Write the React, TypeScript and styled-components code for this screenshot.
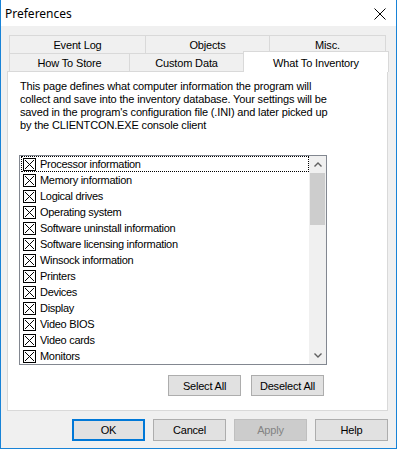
import React from "react";
import styled, { createGlobalStyle } from "styled-components";

const GlobalStyle = createGlobalStyle`
  html, body {
    margin: 0;
    padding: 0;
    background: #ffffff;
  }
  body {
    font-family: "Liberation Sans", Arial, sans-serif;
    font-size: 11px;
    letter-spacing: -0.3px;
    color: #000;
  }
`;

const Window = styled.div`
  width: 397px;
  height: 449px;
  box-sizing: border-box;
  border: 1px solid #1883d7;
  border-top: none;
  background: #f0f0f0;
  display: flex;
  flex-direction: column;
`;

const TitleBar = styled.div`
  height: 26px;
  flex: none;
  background: #ffffff;
  display: flex;
  align-items: center;
  justify-content: space-between;
  padding: 0 10px 0 4px;
`;

const Title = styled.span`
  font-family: "Noto Sans", "Open Sans", sans-serif;
  font-size: 12px;
  letter-spacing: 0;
  color: #000;
`;

const CloseIcon = styled.svg`
  width: 12px;
  height: 12px;
  margin-top: 2px;
`;

const Body = styled.div`
  flex: 1;
  display: flex;
  flex-direction: column;
  padding: 9px 8px 0 6px;
`;

const TabRow = styled.div`
  display: flex;
  align-items: flex-end;
  height: 18px;
  margin-left: 2px;
`;

const Tab = styled.div<{ $width: number; $selected?: boolean }>`
  width: ${(p) => p.$width}px;
  height: ${(p) => (p.$selected ? 21 : 18)}px;
  box-sizing: border-box;
  flex: none;
  border: 1px solid #d9d9d9;
  border-bottom: none;
  background: ${(p) => (p.$selected ? "#ffffff" : "#f0f0f0")};
  display: flex;
  align-items: center;
  justify-content: center;
  padding-top: 1px;
  letter-spacing: -0.15px;
  & + & {
    margin-left: -1px;
  }
  ${(p) =>
    p.$selected &&
    `
    position: relative;
    z-index: 1;
    margin-bottom: -1px;
  `}
`;

const Panel = styled.div`
  height: 340px;
  box-sizing: border-box;
  border: 1px solid #d9d9d9;
  background: #ffffff;
  display: flex;
  flex-direction: column;
  padding: 8px 0 0 11px;
`;

const Description = styled.p`
  margin: 0 0 0 1px;
  width: 340px;
  line-height: 13px;
  letter-spacing: -0.15px;
`;

const ListBox = styled.div`
  margin-top: 23px;
  width: 308px;
  height: 210px;
  box-sizing: border-box;
  border: 1px solid #828790;
  display: flex;
`;

const Items = styled.div`
  flex: 1;
  display: flex;
  flex-direction: column;
  overflow: hidden;
`;

const Item = styled.div<{ $focused?: boolean }>`
  height: 16px;
  flex: none;
  box-sizing: border-box;
  display: flex;
  align-items: center;
  gap: 4px;
  padding-left: 2px;
  margin-left: 1px;
  outline: ${(p) => (p.$focused ? "1px dotted #000" : "none")};
  outline-offset: -1px;
  white-space: nowrap;
`;

const Scrollbar = styled.div`
  width: 17px;
  flex: none;
  background: #f0f0f0;
  display: flex;
  flex-direction: column;
`;

const ArrowBox = styled.div`
  height: 17px;
  flex: none;
  display: flex;
  align-items: center;
  justify-content: center;
`;

const Thumb = styled.div`
  height: 52px;
  margin: 0 1px;
  background: #cdcdcd;
`;

const Track = styled.div`
  flex: 1;
`;

const ListActions = styled.div`
  width: 308px;
  display: flex;
  justify-content: flex-end;
  gap: 10px;
  margin-top: 10px;
  padding-right: 3px;
  box-sizing: border-box;
`;

const Button = styled.button<{ $default?: boolean; $height?: number }>`
  width: 73px;
  height: ${(p) => p.$height ?? 21}px;
  box-sizing: border-box;
  padding: 0;
  font-family: "Liberation Sans", Arial, sans-serif;
  font-size: 11px;
  letter-spacing: -0.2px;
  color: #000;
  background: #e1e1e1;
  border: ${(p) => (p.$default ? "2px solid #0078d7" : "1px solid #adadad")};
  &:disabled {
    background: #cccccc;
    border-color: #bfbfbf;
    color: #838383;
  }
`;

const DialogActions = styled.div`
  display: flex;
  justify-content: flex-end;
  gap: 8px;
  margin-top: 8px;
`;

const CheckMark = () => (
  <svg width="13" height="13" viewBox="0 0 13 13">
    <rect x="0.5" y="0.5" width="12" height="12" fill="#fff" stroke="#000" />
    <path d="M2 2 L11 11 M11 2 L2 11" stroke="#000" strokeWidth="1" shapeRendering="crispEdges" />
  </svg>
);

const Chevron = ({ down }: { down?: boolean }) => (
  <svg width="8" height="5" viewBox="0 0 8 5">
    <path
      d={down ? "M0.5 0.5 L4 4 L7.5 0.5" : "M0.5 4.5 L4 1 L7.5 4.5"}
      fill="none"
      stroke="#606060"
      strokeWidth="1.4"
    />
  </svg>
);

const items = [
  "Processor information",
  "Memory information",
  "Logical drives",
  "Operating system",
  "Software uninstall information",
  "Software licensing information",
  "Winsock information",
  "Printers",
  "Devices",
  "Display",
  "Video BIOS",
  "Video cards",
  "Monitors",
];

const App: React.FC = () => {
  return (
    <>
      <GlobalStyle />
      <Window>
        <TitleBar>
          <Title>Preferences</Title>
          <CloseIcon viewBox="0 0 12 12">
            <path d="M0.5 0.5 L11.5 11.5 M11.5 0.5 L0.5 11.5" stroke="#000" strokeWidth="1" />
          </CloseIcon>
        </TitleBar>
        <Body>
          <TabRow>
            <Tab $width={137}>Event Log</Tab>
            <Tab $width={125}>Objects</Tab>
            <Tab $width={117}>Misc.</Tab>
          </TabRow>
          <TabRow>
            <Tab $width={121}>How To Store</Tab>
            <Tab $width={115}>Custom Data</Tab>
            <Tab $width={146} $selected>
              What To Inventory
            </Tab>
          </TabRow>
          <Panel>
            <Description>
              This page defines what computer information the program will
              <br />
              collect and save into the inventory database. Your settings will be
              <br />
              saved in the program's configuration file (.INI) and later picked up
              <br />
              by the CLIENTCON.EXE console client
            </Description>
            <ListBox>
              <Items>
                {items.map((label, i) => (
                  <Item key={label} $focused={i === 0}>
                    <CheckMark />
                    {label}
                  </Item>
                ))}
              </Items>
              <Scrollbar>
                <ArrowBox>
                  <Chevron />
                </ArrowBox>
                <Thumb />
                <Track />
                <ArrowBox>
                  <Chevron down />
                </ArrowBox>
              </Scrollbar>
            </ListBox>
            <ListActions>
              <Button>Select All</Button>
              <Button>Deselect All</Button>
            </ListActions>
          </Panel>
          <DialogActions>
            <Button $default $height={22}>OK</Button>
            <Button $height={22}>Cancel</Button>
            <Button $height={22} disabled>
              Apply
            </Button>
            <Button $height={22}>Help</Button>
          </DialogActions>
        </Body>
      </Window>
    </>
  );
};

export default App;
